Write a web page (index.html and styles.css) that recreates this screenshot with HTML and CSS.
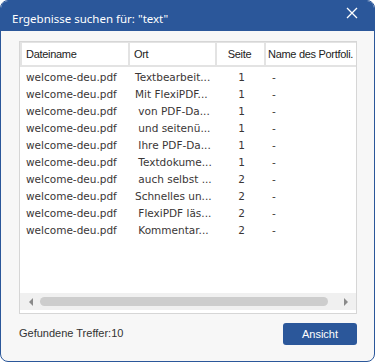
FILE: index.html
```html
<!DOCTYPE html>
<html lang="de">
<head>
    <meta charset="UTF-8">
    <title>Ergebnisse suchen</title>
    <link rel="stylesheet" href="styles.css">
</head>
<body>
    <div class="window">
        <div class="titlebar">
            <span class="title">Ergebnisse suchen für: "text"</span>
            <svg class="close" width="12" height="12" viewBox="0 0 12 12">
                <path d="M1 1 L11 11 M11 1 L1 11" stroke="#fff" stroke-width="1.3" fill="none"/>
            </svg>
        </div>

        <div class="content">
            <div class="table-box">
                <div class="head">
                    <div class="hcell c-name">Dateiname</div>
                    <div class="hcell c-ort">Ort</div>
                    <div class="hcell c-seite">Seite</div>
                    <div class="hcell c-port">Name des Portfoli.</div>
                </div>
                <div class="rows" id="rows"></div>
                <div class="scrollbar">
                    <span class="arrow left"></span>
                    <div class="thumb"></div>
                    <span class="arrow right"></span>
                </div>
            </div>

            <div class="footer">
                <span class="count">Gefundene Treffer:10</span>
                <button class="view-btn">Ansicht</button>
            </div>
        </div>
    </div>

    <script>
        const results = [
            ['Textbearbeit...', 1],
            ['Mit FlexiPDF...', 1],
            [' von PDF-Da...', 1],
            [' und seitenü...', 1],
            [' Ihre PDF-Da...', 1],
            [' Textdokume...', 1],
            [' auch selbst ...', 2],
            ['Schnelles un...', 2],
            [' FlexiPDF läs...', 2],
            [' Kommentar...', 2]
        ];

        const list = document.getElementById('rows');
        results.forEach(r => {
            const div = document.createElement('div');
            div.className = 'row';
            div.innerHTML = `
                <span class="cell c-name">welcome-deu.pdf</span>
                <span class="cell c-ort">${r[0]}</span>
                <span class="cell c-seite">${r[1]}</span>
                <span class="cell c-port">-</span>
            `;
            list.appendChild(div);
        });
    </script>
</body>
</html>
```

FILE: styles.css
```css
body {
    margin: 0;
    font-family: 'Liberation Sans', Arial, sans-serif;
    background: #ffffff;
}
.window {
    width: 375px;
    height: 362px;
    box-sizing: border-box;
    border: 1px solid #2b579a;
    border-radius: 8px;
    background: #f7f7f7;
    overflow: hidden;
    display: flex;
    flex-direction: column;
}
.titlebar {
    height: 30px;
    background: #2b579a;
    display: flex;
    align-items: center;
    justify-content: space-between;
    padding: 0 16px 0 11px;
    flex-shrink: 0;
}
.title {
    color: #fff;
    font-family: 'Noto Sans', sans-serif;
    font-size: 11.5px;
    margin-top: 4px;
}
.close {
    margin-top: -6px;
}
.content {
    padding: 10px 17px 0 18px;
    flex: 1;
}
.table-box {
    height: 273px;
    box-sizing: border-box;
    border: 1px solid #d6d6d6;
    background: #fff;
    display: flex;
    flex-direction: column;
}
.head {
    display: flex;
    height: 25px;
    box-sizing: border-box;
    border: 2px solid #e3e3e3;
    border-top-width: 1px;
    border-right: none;
    font-size: 11px;
    letter-spacing: -0.3px;
    color: #222;
}
.hcell {
    display: flex;
    align-items: center;
    box-sizing: border-box;
    border-right: 2px solid #e3e3e3;
    padding-left: 4px;
    white-space: nowrap;
    overflow: hidden;
}
.c-name { width: 108px; flex-shrink: 0; }
.c-ort { width: 87px; flex-shrink: 0; }
.c-seite { width: 49px; flex-shrink: 0; }
.c-port { flex: 1; }
.hcell.c-seite {
    justify-content: center;
    padding-left: 0;
    padding-right: 2px;
}
.hcell.c-port {
    padding-left: 2px;
    border-right: none;
}
.rows {
    flex: 1;
    padding-top: 1px;
}
.row {
    display: flex;
    height: 17px;
    align-items: center;
    font-family: 'DejaVu Sans', Verdana, sans-serif;
    font-size: 10.5px;
    color: #3a3636;
}
.cell {
    white-space: pre;
    overflow: hidden;
    box-sizing: border-box;
}
.cell.c-name { padding-left: 6px; }
.cell.c-ort { padding-left: 7px; }
.cell.c-seite { text-align: center; padding-left: 4px; }
.cell.c-port { padding-left: 8px; }
.scrollbar {
    height: 17px;
    margin: 0 0 3px 0;
    background: #f0f0f0;
    display: flex;
    align-items: center;
    gap: 4px;
    padding: 0 8px 0 9px;
}
.thumb {
    flex: 1;
    height: 9px;
    border-radius: 5px;
    background: #cdcdcd;
}
.arrow {
    width: 0;
    height: 0;
    border-top: 4px solid transparent;
    border-bottom: 4px solid transparent;
}
.arrow.left {
    border-right: 4px solid #8a8a8a;
    margin-right: 3px;
}
.arrow.right {
    border-left: 4px solid #8a8a8a;
    margin-left: 12px;
}
.footer {
    display: flex;
    justify-content: space-between;
    align-items: center;
    margin-top: 9px;
}
.count {
    font-size: 11px;
    color: #333;
    margin-top: -3px;
}
.view-btn {
    width: 74px;
    height: 22px;
    border: none;
    border-radius: 3px;
    background: #2b579a;
    color: #fff;
    font-family: 'Liberation Sans', Arial, sans-serif;
    font-size: 11px;
    padding: 0;
    cursor: pointer;
}
```
